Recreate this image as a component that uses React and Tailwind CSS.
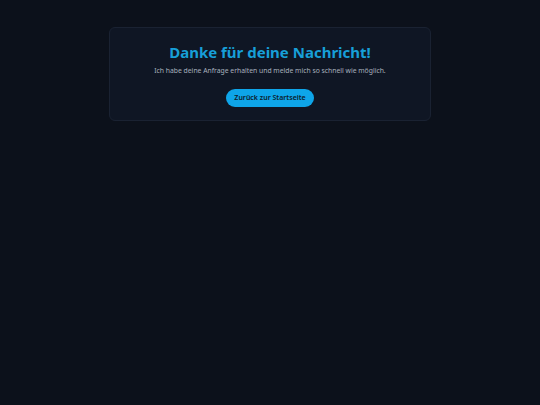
export default function App() {
  return (
    <div className="min-h-screen bg-[#0c111b] pt-[27px] font-['Noto_Sans',sans-serif]">
      <div className="mx-auto w-[322px] rounded-md border border-[#1a2232] bg-[#0f1624] px-6 pt-[14px] pb-[13px] text-center">
        <h1 className="text-[15px] font-bold leading-5 text-[#179fd8]">Danke für deine Nachricht!</h1>
        <p className="mt-[3px] text-[6.8px] leading-3 text-[#a9b1be]">
          Ich habe deine Anfrage erhalten und melde mich so schnell wie möglich.
        </p>
        <button
          type="button"
          className="mt-[12px] rounded-full bg-[#0ea5e9] px-[8px] py-[4px] text-[7px] font-semibold leading-[10px] text-[#0c1a2b]"
        >
          Zurück zur Startseite
        </button>
      </div>
    </div>
  );
}
